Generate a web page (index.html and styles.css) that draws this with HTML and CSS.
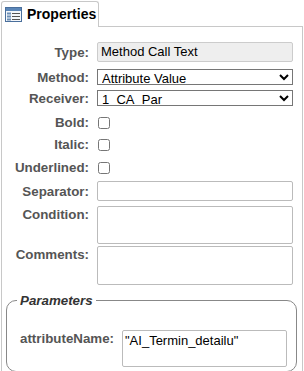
FILE: index.html
```html
<!DOCTYPE html>
<html lang="en">
<head>
  <meta charset="UTF-8">
  <title>Properties</title>
  <link rel="stylesheet" href="styles.css">
</head>
<body>
  <div class="tabs">
    <div class="tab">
      <svg class="tab-icon" width="17" height="15" viewBox="0 0 17 15">
        <rect x="0.5" y="0.5" width="16" height="14" fill="#f4f7fb" stroke="#4a6f9c"/>
        <rect x="1" y="1" width="15" height="3" fill="#5b86b8"/>
        <rect x="2" y="5.5" width="4" height="2" fill="#6d8fb5"/>
        <rect x="2" y="8.5" width="4" height="2" fill="#6d8fb5"/>
        <rect x="2" y="11.5" width="4" height="2" fill="#6d8fb5"/>
        <rect x="7" y="6" width="8" height="1" fill="#555"/>
        <rect x="7" y="9" width="8" height="1" fill="#555"/>
        <rect x="7" y="12" width="8" height="1" fill="#555"/>
      </svg>
      <span>Properties</span>
    </div>
  </div>

  <div class="panel">
    <div class="row row-type">
      <label class="form-label">Type:</label>
      <div class="readonly">Method Call Text</div>
    </div>
    <div class="row row-method">
      <label class="form-label">Method:</label>
      <select class="form-select">
        <option>Attribute Value</option>
      </select>
    </div>
    <div class="row row-receiver">
      <label class="form-label">Receiver:</label>
      <select class="form-select">
        <option>1_CA_Par</option>
      </select>
    </div>
    <div class="row row-bold">
      <label class="form-label">Bold:</label>
      <input type="checkbox" class="form-check">
    </div>
    <div class="row row-italic">
      <label class="form-label">Italic:</label>
      <input type="checkbox" class="form-check">
    </div>
    <div class="row row-underline">
      <label class="form-label">Underlined:</label>
      <input type="checkbox" class="form-check">
    </div>
    <div class="row row-separator">
      <label class="form-label">Separator:</label>
      <input type="text" class="form-input">
    </div>
    <div class="row row-top row-condition">
      <label class="form-label">Condition:</label>
      <textarea class="form-area"></textarea>
    </div>
    <div class="row row-top row-comments">
      <label class="form-label">Comments:</label>
      <textarea class="form-area"></textarea>
    </div>

    <fieldset class="params">
      <legend>Parameters</legend>
      <div class="param-row">
        <label class="param-label">attributeName:</label>
        <textarea class="param-area">"AI_Termin_detailu"</textarea>
      </div>
    </fieldset>
  </div>
</body>
</html>
```

FILE: styles.css
```css
* {
  margin: 0;
  padding: 0;
  box-sizing: border-box;
}

body {
  font-family: "Liberation Sans", Arial, sans-serif;
  font-size: 13px;
  line-height: 15px;
  color: #000;
  background: #fff;
  width: 304px;
  overflow: hidden;
}

.tabs {
  display: flex;
  padding-left: 1px;
  padding-top: 1px;
}

.tab {
  display: flex;
  align-items: center;
  gap: 5px;
  width: 98px;
  height: 26px;
  padding: 0 0 1px 3px;
  border: 1px solid #c8c8c8;
  border-bottom: none;
  border-radius: 3px 3px 0 0;
  background: #fff;
  font-size: 14px;
  font-weight: bold;
  margin-bottom: -1px;
  position: relative;
  z-index: 1;
}

.tab-icon {
  flex: none;
}

.panel {
  margin-left: 1px;
  width: 302px;
  border: 1px solid #c8c8c8;
  padding: 15px 4px 30px 4px;
}

.row {
  display: flex;
  align-items: center;
  gap: 8px;
  min-height: 15px;
}

.row-top {
  align-items: flex-start;
}

.row-method { margin-top: 7px; }
.row-receiver { margin-top: 5px; }
.row-bold { margin-top: 9px; }
.row-italic { margin-top: 7px; }
.row-underline { margin-top: 8px; }
.row-separator { margin-top: 6px; }
.row-condition { margin-top: 5px; }
.row-comments { margin-top: 2px; }

.form-label {
  width: 83px;
  flex: none;
  text-align: right;
  font-size: 13.33px;
  font-weight: bold;
  color: #555;
  white-space: nowrap;
}

.row-top .form-label {
  padding-top: 1px;
}

.readonly {
  width: 196px;
  height: 20px;
  line-height: 18px;
  padding: 0 3px;
  background: #eee;
  border: 1px solid #ccc;
  border-radius: 2px;
}

.form-select {
  width: 196px;
  height: 16px;
  font-family: inherit;
  font-size: 13px;
  border: 1px solid #767676;
  background: #fff;
  color: #000;
  padding: 0;
}

.form-check {
  width: 12px;
  height: 12px;
  margin: 0 0 0 1px;
}

.form-input {
  width: 196px;
  height: 20px;
  border: 1px solid #bbb;
  border-radius: 2px;
}

.form-area {
  width: 196px;
  height: 38px;
  border: 1px solid #bbb;
  border-radius: 2px;
  resize: none;
}

.row-comments .form-area {
  height: 39px;
}

.params {
  margin: 8px 1px 0 0;
  border: 1px solid #888;
  border-radius: 10px;
  padding: 22px 9px 4px 13px;
}

.params legend {
  font-style: italic;
  font-weight: bold;
  font-size: 13.33px;
  color: #333;
  padding: 0 3px;
  margin-left: -3px;
}

.param-row {
  display: flex;
  align-items: flex-start;
  gap: 10px;
}

.param-label {
  font-weight: bold;
  font-size: 13.33px;
  color: #555;
  padding-top: 1px;
  width: 92px;
  flex: none;
}

.param-area {
  width: 165px;
  height: 37px;
  border: 1px solid #bbb;
  border-radius: 2px;
  resize: none;
  font-family: inherit;
  font-size: 13px;
  padding: 2px 2px;
}
```
